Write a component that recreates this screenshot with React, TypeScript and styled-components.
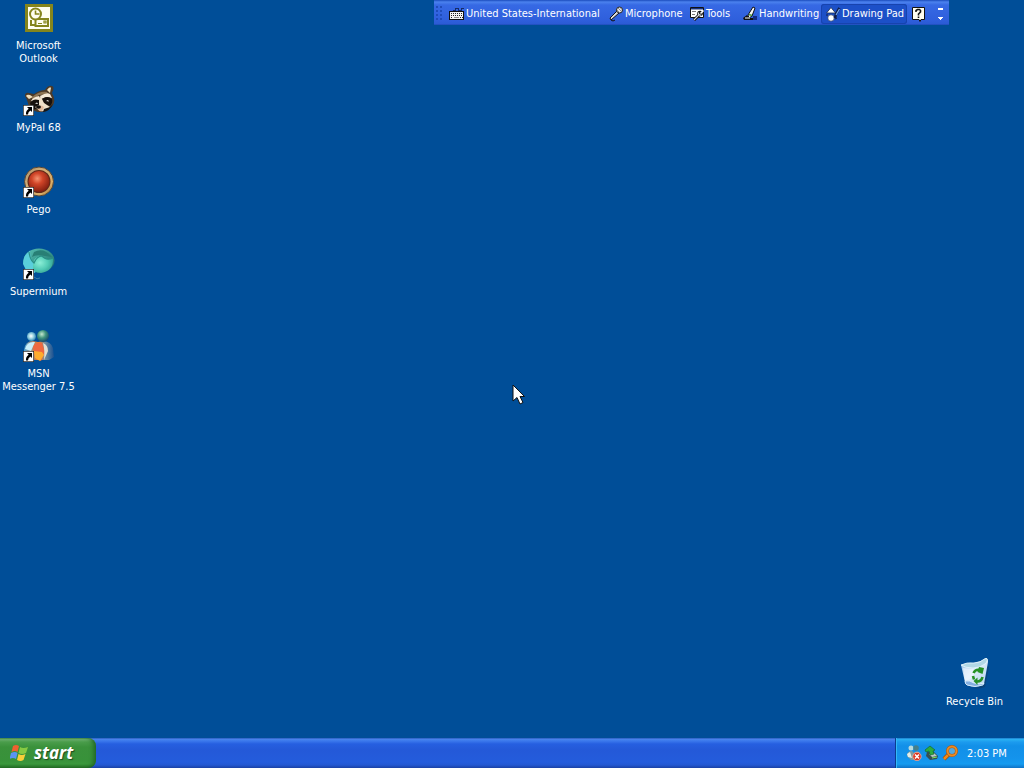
import React from "react";
import styled, { createGlobalStyle } from "styled-components";

const GlobalStyle = createGlobalStyle`
  * { box-sizing: border-box; }
  html, body { margin: 0; padding: 0; }
  body {
    background: #004e98;
    font-family: Tahoma, "DejaVu Sans Condensed", "Noto Sans", sans-serif;
    font-size: 11px;
    line-height: 13px;
    color: #fff;
    overflow: hidden;
  }
  button { font: inherit; color: inherit; border: 0; padding: 0; background: none; }
  svg { display: block; flex: none; }
`;

const Screen = styled.div`
  position: relative;
  display: flex;
  flex-direction: column;
  min-height: 100vh;
`;

const Desktop = styled.main`
  flex: 1;
  display: flex;
  justify-content: space-between;
`;

const IconColumn = styled.nav<{ $end?: boolean }>`
  display: flex;
  flex-direction: column;
  gap: 2px;
  justify-content: ${(p) => (p.$end ? "flex-end" : "flex-start")};
  padding: ${(p) => (p.$end ? "0 11px 0 0" : "2px 0 0")};
`;

const Shortcut = styled.button`
  display: flex;
  flex-direction: column;
  align-items: center;
  justify-content: flex-start;
  gap: 5px;
  width: 77px;
  height: 80px;
  white-space: pre;
  text-align: center;
`;

const LanguageBar = styled.header`
  position: absolute;
  top: 0;
  right: 75px;
  display: grid;
  grid-template-columns: 11px 160px 81px 53px 82px 86px 24px 18px;
  align-items: center;
  height: 25px;
  padding-top: 2px;
  background: linear-gradient(#1b4cbd 0, #4b82ee 2px, #3669e4 5px, #2f5fdc 20px, #2b5bd4 24px, #1a48b0 25px);
`;

const Grip = styled.span`
  width: 6px;
  height: 16px;
  margin-left: 2px;
  background: radial-gradient(circle at 1px 1px, #1f4cba 1px, transparent 1px) 0 0 / 4px 4px;
`;

const BarButton = styled.button<{ $pressed?: boolean }>`
  display: flex;
  align-items: center;
  gap: 1px;
  height: 20px;
  padding: 0 4px;
  border-radius: 3px;
  white-space: nowrap;
  background: ${(p) => (p.$pressed ? "#1c50c8" : "transparent")};
  box-shadow: ${(p) => (p.$pressed ? "inset 0 0 0 1px #1743ae" : "none")};
`;

const Taskbar = styled.footer`
  display: flex;
  height: 30px;
  background: linear-gradient(#1f4fae 0, #4a86ee 1px, #3b78ec 3px, #265fe0 6px, #2459d8 12px, #245cdc 24px, #2358d2 27px, #1a41a5 30px);
`;

const StartButton = styled.button`
  display: flex;
  align-items: center;
  gap: 4px;
  width: 96px;
  padding: 0 0 0 10px;
  border-radius: 0 8px 8px 0;
  background: linear-gradient(#3a7d3c 0, #71b473 1px, #4a9d4b 4px, #3a913b 9px, #38923a 22px, #3a983c 26px, #226b24 30px);
  box-shadow: inset -4px 0 5px -2px #1e6222;
  font-family: "Open Sans", "Noto Sans", sans-serif;
  font-weight: 700;
  font-style: italic;
  font-size: 17px;
  line-height: 20px;
  text-shadow: 1px 1px 1px #1d4a1e;
`;

const Tray = styled.section`
  display: flex;
  align-items: center;
  gap: 2px;
  width: 129px;
  margin-left: auto;
  padding: 0 0 0 10px;
  border-left: 1px solid #0b3c8e;
  background: linear-gradient(#1769be 0, #2bb4f4 1px, #1c9bee 4px, #1290e8 8px, #1493ec 20px, #159bf0 26px, #0f72c6 30px);
  box-shadow: inset 1px 0 #34b9f8;
`;

const Clock = styled.time`
  margin-left: 6px;
  white-space: nowrap;
`;

const Pointer = styled.div`
  position: absolute;
  left: 50%;
  top: 50%;
`;

const LinkArrow = () => (
  <g>
    <path d="M0 21h11v11H0z" fill="#222" />
    <path d="M.7 21.700h9.600v9.600H.7z" fill="#fff" />
    <path d="M4 23h5v5L7.400 26.400Q5 28 5 30.500H3Q2.500 27 5.700 24.700z" fill="#000" />
  </g>
);

const OutlookIcon = () => (
  <svg width="32" height="32" viewBox="0 0 32 32">
    <path d="M2 2h28v28H2z" fill="#85851c" />
    <path d="M5 5h22v22H5z" fill="#fffef0" />
    <path d="M12.500 17h12.500v7H12.500z" fill="#fffef0" stroke="#85851c" strokeWidth="2" />
    <path d="M15 21.500h4M21 19h2v2h-2z" fill="none" stroke="#85851c" strokeWidth="1.200" />
    <path d="M8 18v5h4" fill="none" stroke="#85851c" strokeWidth="2" />
    <circle cx="12.500" cy="12" r="5.500" fill="#fffef0" stroke="#85851c" strokeWidth="2" />
    <path d="M12.500 8.500V12h4" fill="none" stroke="#85851c" strokeWidth="1.600" />
  </svg>
);

const RaccoonIcon = () => (
  <svg width="32" height="32" viewBox="0 0 32 32">
    <path d="M2 12q0-4 4-3l5 1q6-4 11-4 3-5 7-4 3 1 0 7 4 7 1 12-5 8-15 7Q6 26 4 16z" fill="#4c3a28" />
    <path d="M3 12q1-2 4-1l3 2-4 2zM24 6q3-4 4-2l-1 5z" fill="#f0dfbc" />
    <path d="M9 13q7-6 15-5l1 2-9 1-7 6z" fill="#8d7453" />
    <path d="M8 17q2-4 8-5l2 4-7 3zM17 12q7-4 10-2l2 4-6-1-5 2z" fill="#f5e9d6" />
    <path d="M7 19q3-5 9-3l3 4-3 4-7 2zM19 15q6-4 10 0 1 4-2 7-4-1-7-4z" fill="#17110e" />
    <path d="M16 14l2-1 3 6 6 4q-4 5-10 4l-5-4 4-2z" fill="#eee0ca" />
    <path d="M12 19.500l2-1 1 1.500zM23 17l2-1 1 1.500z" fill="#fff" />
    <path d="M14 23q4-3 7 0l-2 4q-4 1-5-4" fill="#e1b99b" />
    <ellipse cx="15.500" cy="23" rx="2.500" ry="1.800" fill="#14100f" />
    <path d="M20 28q7-1 10-8l-3 3-6 2z" fill="#161616" />
    <LinkArrow />
  </svg>
);

const PegoIcon = () => (
  <svg width="32" height="32" viewBox="0 0 32 32">
    <defs>
      <radialGradient id="pegoRed" cx=".42" cy=".36" r=".65">
        <stop offset="0" stopColor="#f49370" /><stop offset=".4" stopColor="#d14528" /><stop offset="1" stopColor="#831f10" />
      </radialGradient>
      <linearGradient id="pegoRing" x1="0" y1="0" x2="1" y2="1">
        <stop offset="0" stopColor="#a58b68" /><stop offset=".35" stopColor="#d0ae78" /><stop offset=".75" stopColor="#d9ad65" /><stop offset="1" stopColor="#85592a" />
      </linearGradient>
    </defs>
    <circle cx="16" cy="15.500" r="14.500" fill="url(#pegoRing)" stroke="#554638" />
    <circle cx="16" cy="15.500" r="11.500" fill="#612819" />
    <circle cx="16" cy="15.500" r="10.500" fill="url(#pegoRed)" />
    <LinkArrow />
  </svg>
);

const SupermiumIcon = () => (
  <svg width="32" height="32" viewBox="0 0 32 32">
    <defs>
      <linearGradient id="orb" x1="0" y1="0" x2="1" y2="1">
        <stop offset="0" stopColor="#5ac4b8" /><stop offset=".6" stopColor="#328d83" /><stop offset="1" stopColor="#176272" />
      </linearGradient>
      <radialGradient id="orbCore" cx=".35" cy=".4" r=".65">
        <stop offset="0" stopColor="#8beed6" /><stop offset=".6" stopColor="#53ccb6" /><stop offset="1" stopColor="#37a697" />
      </radialGradient>
    </defs>
    <ellipse cx="16" cy="12.500" rx="15.500" ry="12" fill="url(#orb)" />
    <path d="M7 3Q0 7 0 16l3 6 9 3 2-6Q7 12 7 3" fill="#5acfdb" />
    <path d="M11 4q10-5 18 5l-7-1q-9-2-13 1" fill="#287f75" />
    <path d="M11 12q3-4 7-4 5 5 12 2 1 13-12 15-9 0-8-8z" fill="url(#orbCore)" />
    <path d="M6 4q1 8 5 11 3-7 8-7 4 5 11 2" fill="none" stroke="#2a8e84" strokeWidth="1.200" />
    <path d="M11 29q3 3 6 1" fill="none" stroke="#367ca9" />
    <LinkArrow />
  </svg>
);

const MessengerIcon = () => (
  <svg width="32" height="32" viewBox="0 0 32 32">
    <defs>
      <radialGradient id="headBlue" cx=".45" cy=".45" r=".6">
        <stop offset="0" stopColor="#fff" /><stop offset=".4" stopColor="#a9dce8" /><stop offset="1" stopColor="#267fae" />
      </radialGradient>
      <radialGradient id="headGreen" cx=".4" cy=".35" r=".65">
        <stop offset="0" stopColor="#c4e7cf" /><stop offset=".5" stopColor="#41957d" /><stop offset="1" stopColor="#174c6e" />
      </radialGradient>
      <linearGradient id="msnBody">
        <stop offset="0" stopColor="#4da3d4" /><stop offset=".5" stopColor="#f47624" /><stop offset=".7" stopColor="#6e8fa6" /><stop offset="1" stopColor="#174f91" />
      </linearGradient>
    </defs>
    <path d="M1 20q1-9 9-9l5 1q12-3 15 6l1 9-5 3H12L1 26z" fill="url(#msnBody)" />
    <path d="M2 19q2-8 10-7l-4 9z" fill="#c9effb" />
    <path d="M10 17q2-5 9-4l3 9-4 9-6-4z" fill="#ee6840" />
    <path d="M11 21l8 1 2 3-4 6-5-3z" fill="#ffad2e" />
    <path d="M20 13q5 2 5 8l-4 9q1-10-1-17" fill="#e3dfd2" />
    <circle cx="8.500" cy="6.500" r="4.500" fill="url(#headBlue)" />
    <circle cx="20" cy="6" r="6" fill="url(#headGreen)" />
    <LinkArrow />
  </svg>
);

const RecycleIcon = () => (
  <svg width="32" height="32" viewBox="0 0 32 32">
    <defs>
      <linearGradient id="bin" x1="0" y1="0" x2="1" y2="1">
        <stop offset="0" stopColor="#8db9e2" /><stop offset=".45" stopColor="#ddecfa" /><stop offset="1" stopColor="#b3d2ec" />
      </linearGradient>
    </defs>
    <path d="M8 29q9 3 17-2l4-19 1 1-4 20q-8 3-18 0z" fill="#103c68" opacity=".6" />
    <path d="M2 7q6-2 12-2 8-1 13-5 2 0 2 4l-4 22q-8 5-17 1-2-1-2-3z" fill="url(#bin)" />
    <path d="M2 7q6-3 13-2 6 0 12-5 3 2-1 6-5 4-12 4Q6 10 2 7" fill="#b2d8e6" stroke="#e8f7ff" strokeWidth=".8" />
    <path d="M4 10l10 1 3 3-5 7-6 2z" fill="#f0f7ff" opacity=".65" />
    <path d="M6 23q5-1 9 2 6 2 10 0l-1 2q-8 3-16 0-2-1-2-4" fill="#83afe0" stroke="#e9f7ff" strokeWidth=".8" />
    <g fill="none" stroke="#269126" strokeWidth="2.600">
      <path d="M14.500 15q2-4 6.500-3" />
      <path d="M23.500 19q-1 4.500-5.500 4.500" />
      <path d="M14 18l1 3.500" />
    </g>
    <path d="M20 9l5 1-1.500 6-5-2zM18.500 19.500v7.500l-4-4z" fill="#269126" />
  </svg>
);

const KeyboardIcon = () => (
  <svg width="16" height="16" viewBox="0 0 16 16" shapeRendering="crispEdges">
    <path d="M4 4h2V2h3v2h3V2h3" stroke="#152c68" fill="none" />
    <path d="M0 5h15v9H0z" fill="#111" />
    <path d="M1 6h13v7H1z" fill="#f4f4f4" />
    <path d="M2 7.500h12M2 9.500h12M2 11.500h2M11 11.500h3" stroke="#222" strokeDasharray="1 1" />
    <path d="M5 11.500h5" stroke="#888" />
  </svg>
);

const MicIcon = () => (
  <svg width="15" height="16" viewBox="0 0 15 16">
    <path d="M1 12l1 2 8-7-2-2z" fill="#ddd" stroke="#111" />
    <circle cx="10.500" cy="4" r="3" fill="#e8e8e8" stroke="#222" />
    <path d="M9 2l4 4M8 4l3 3M11 1.500l2 2" stroke="#777" strokeWidth=".8" />
    <path d="M2 14q2 2 4 0" stroke="#111" fill="none" />
  </svg>
);

const ToolsIcon = () => (
  <svg width="15" height="16" viewBox="0 0 15 16">
    <path d="M.5 1.500h13v10H.5z" fill="#fff" stroke="#111" />
    <path d="M1 2h12v1.500H1z" fill="#16307c" />
    <path d="M2 5.500h4M2 8.500h3" stroke="#777" />
    <path d="M4 14l5-5" stroke="#111" strokeWidth="3" />
    <circle cx="10" cy="7.500" r="2.800" fill="#111" />
    <path d="M4 13.800L9.500 8.300" stroke="#ddd" strokeWidth="1.200" />
    <path d="M8.500 6.500q-.5 3 3 2.500" stroke="#ddd" strokeWidth="1.200" fill="none" />
    <path d="M10.500 7.500l3-3" stroke="#fff" strokeWidth="1.600" />
  </svg>
);

const PenIcon = () => (
  <svg width="15" height="16" viewBox="0 0 15 16">
    <path d="M5 9l5-8 2 1-3 8-3 2z" fill="#f7f7f7" stroke="#111" />
    <path d="M6 8.500l3 1" stroke="#4f9d3d" strokeWidth="1.500" />
    <path d="M0 12l4-3 2 3h4v2H1z" fill="#111" />
    <path d="M2 12h5" stroke="#fff" />
    <path d="M10 10h4v4h-4z" fill="#142c82" />
  </svg>
);

const DrawingIcon = () => (
  <svg width="16" height="16" viewBox="0 0 16 16">
    <path d="M1.500 7L6 1.500 10.500 7z" fill="#fff" stroke="#16294e" strokeWidth=".8" />
    <circle cx="6" cy="12" r="3.200" fill="#fff" stroke="#16294e" strokeWidth=".6" />
    <path d="M10 12l1-4L14.500 2" fill="none" stroke="#101c48" strokeWidth="2.600" />
    <path d="M11 9l3.500-6" stroke="#76a7f0" strokeWidth="1.200" />
    <path d="M1 9h2M10 13l2-1" stroke="#101c48" />
  </svg>
);

const HelpIcon = () => (
  <svg width="14" height="16" viewBox="0 0 14 16">
    <path d="M1.500 1.500h12v12H10l-1 2-1-2H1.500z" fill="#fffef0" stroke="#111" />
    <path d="M5 6V4.500L6.500 3.500h2l1 1V6l-2 2v1.500M7.500 10.500V12" fill="none" stroke="#111" strokeWidth="1.600" />
  </svg>
);

const OptionsIcon = () => (
  <svg width="9" height="16" viewBox="0 0 9 16" shapeRendering="crispEdges">
    <path d="M3 2h5v2H3zM3 11h5v1H7v1H6v1H5v-1H4v-1H3z" fill="#fff" />
  </svg>
);

const WindowsLogo = () => (
  <svg width="20" height="20" viewBox="0 0 20 20">
    <path d="M3 3q3-2 6 0L7.500 9Q5 7 1.500 9z" fill="#ef6130" />
    <path d="M10 4q3 2 8 0l-2 6q-4 2-7.500 0z" fill="#86c943" />
    <path d="M1 10q4-2 6.500 0L6 16q-3-2-6.500 0z" fill="#5b94f3" />
    <path d="M8.500 11q3 2 7 0l-2 6q-3 2-6.500 0z" fill="#f9ce39" />
  </svg>
);

const TrayMessenger = () => (
  <svg width="16" height="16" viewBox="0 0 16 16">
    <circle cx="5" cy="3" r="2.500" fill="#b7dbe0" /><circle cx="10" cy="3" r="2.800" fill="#457f8b" />
    <path d="M1 11q0-5 5-5l2 2q5-4 7 3l-3 4H5z" fill="#7d9a9e" />
    <path d="M1 9l3-2 2 6-4-1z" fill="#e5eee8" />
    <circle cx="11" cy="11.500" r="4.200" fill="#dc3521" stroke="#f5c1b2" strokeWidth=".7" />
    <path d="M9 9.500l4 4m0-4l-4 4" stroke="#fff" strokeWidth="1.500" />
  </svg>
);

const TrayHardware = () => (
  <svg width="16" height="16" viewBox="0 0 16 16">
    <path d="M3 7l6-1 5 5-1 3-7 1-4-4z" fill="#364e52" />
    <path d="M5 9l5-1 3 3-5 1z" fill="#b9c9c3" />
    <path d="M8 13l5-1" stroke="#7ee25c" />
    <path d="M1 5l5-4 5 4-2 1 1 3-4 1-1-4-3 1z" fill="#2cab3f" stroke="#146a32" strokeWidth=".7" />
  </svg>
);

const TraySearch = () => (
  <svg width="17" height="16" viewBox="0 0 17 16">
    <path d="M7 9l-5 5" stroke="#9c4c08" strokeWidth="4" />
    <path d="M7 9l-5 5" stroke="#f38a17" strokeWidth="2.500" />
    <circle cx="10" cy="6" r="4.500" fill="#52a9df" stroke="#a45412" strokeWidth="3" />
    <circle cx="10" cy="6" r="4.500" fill="none" stroke="#e98a22" strokeWidth="2" />
  </svg>
);

const CursorIcon = () => (
  <svg width="13" height="22" viewBox="0 0 13 22">
    <path d="M1 1v16l4-3.500L8 20l3-1.500-3-6h4.500z" fill="#fff" stroke="#111" />
  </svg>
);

const shortcuts = [
  { label: "Microsoft\nOutlook", Icon: OutlookIcon },
  { label: "MyPal 68", Icon: RaccoonIcon },
  { label: "Pego", Icon: PegoIcon },
  { label: "Supermium", Icon: SupermiumIcon },
  { label: "MSN\nMessenger 7.5", Icon: MessengerIcon },
];

const tools = [
  { label: "United States-International", Icon: KeyboardIcon },
  { label: "Microphone", Icon: MicIcon },
  { label: "Tools", Icon: ToolsIcon },
  { label: "Handwriting", Icon: PenIcon },
  { label: "Drawing Pad", Icon: DrawingIcon, pressed: true },
];

export default function App() {
  return (
    <Screen>
      <GlobalStyle />
      <Desktop>
        <IconColumn aria-label="Shortcuts">
          {shortcuts.map(({ label, Icon }) => (
            <Shortcut key={label}><Icon />{label}</Shortcut>
          ))}
        </IconColumn>
        <IconColumn $end aria-label="System">
          <Shortcut><RecycleIcon />Recycle Bin</Shortcut>
        </IconColumn>
      </Desktop>
      <LanguageBar>
        <Grip />
        {tools.map(({ label, Icon, pressed }) => (
          <BarButton key={label} $pressed={pressed} aria-pressed={pressed}><Icon />{label}</BarButton>
        ))}
        <BarButton aria-label="Help"><HelpIcon /></BarButton>
        <BarButton aria-label="Options"><OptionsIcon /></BarButton>
      </LanguageBar>
      <Taskbar>
        <StartButton><WindowsLogo />start</StartButton>
        <Tray aria-label="Notification area">
          <TrayMessenger />
          <TrayHardware />
          <TraySearch />
          <Clock>2:03 PM</Clock>
        </Tray>
      </Taskbar>
      <Pointer><CursorIcon /></Pointer>
    </Screen>
  );
}
